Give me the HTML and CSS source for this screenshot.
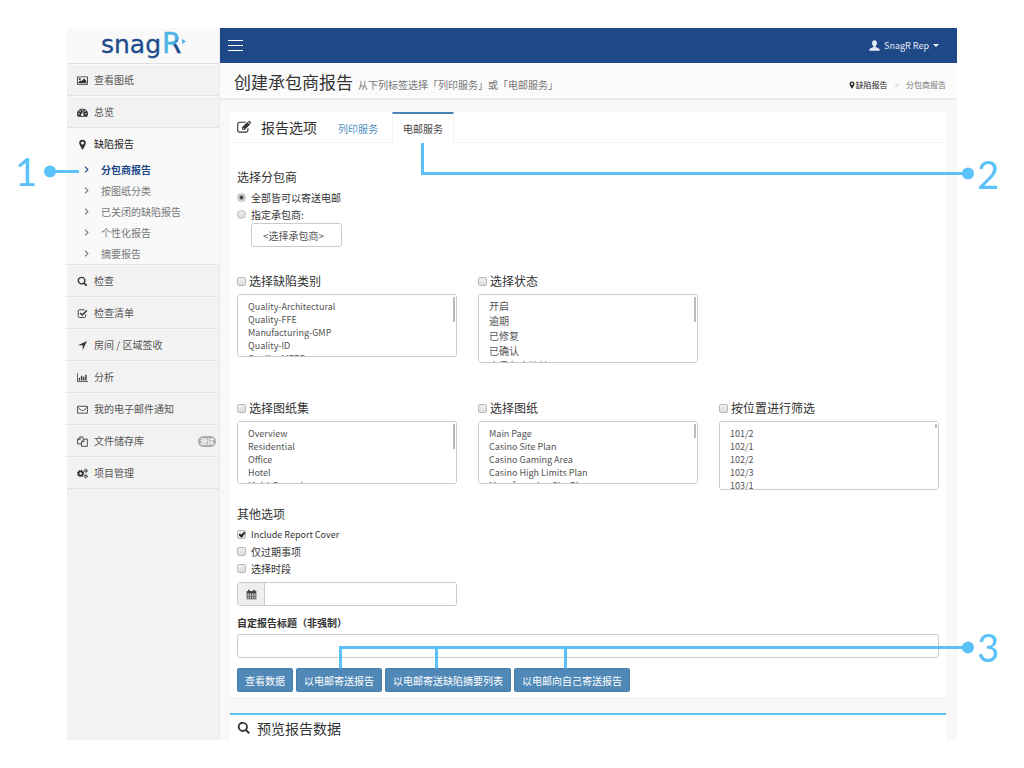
FILE: index.html
```html
<!DOCTYPE html>
<html lang="zh-CN">
<head>
	<meta charset="UTF-8">
	<title>创建承包商报告</title>
	<link rel="stylesheet" href="styles.css">
</head>
<body>
	<svg class="sprite" width="0" height="0" aria-hidden="true">
		<symbol id="i-image" viewBox="0 0 16 16"><path fill-rule="evenodd" d="M1 2h14a1 1 0 0 1 1 1v10a1 1 0 0 1-1 1H1a1 1 0 0 1-1-1V3a1 1 0 0 1 1-1zm.2 1.200v9.600h13.600V3.200z"/><circle cx="4" cy="5.700" r="1.500"/><path d="M2.300 11.800V10l2.500-2.500L6.300 9l4-4 3.400 3.400v3.400z"/></symbol>
		<symbol id="i-dash" viewBox="0 0 16 16"><path fill-rule="evenodd" d="M8 2a8 8 0 0 0-6.800 12.200h13.600A8 8 0 0 0 8 2zM2.800 8.800a1.100 1.100 0 1 1 0 2.200 1.100 1.100 0 0 1 0-2.200zm1.700-4a1.100 1.100 0 1 1 0 2.200 1.100 1.100 0 0 1 0-2.200zM8 3.100a1.100 1.100 0 1 1 0 2.200 1.100 1.100 0 0 1 0-2.200zm1.600 3.300-.8 3.300a1.900 1.900 0 1 1-1.200-.3l.9-3.300zm2.100-1.600a1.100 1.100 0 1 1 0 2.200 1.100 1.100 0 0 1 0-2.200zm1.500 4a1.100 1.100 0 1 1 0 2.200 1.100 1.100 0 0 1 0-2.200z"/></symbol>
		<symbol id="i-pin" viewBox="0 0 16 16"><path fill-rule="evenodd" d="M8 1a4.800 4.800 0 0 1 4.800 4.800c0 .8-.2 1.500-.5 2.100L9 14.500a1.100 1.100 0 0 1-2 0L3.700 7.900a4.800 4.800 0 0 1-.5-2.100A4.800 4.800 0 0 1 8 1zm0 2.600a2.200 2.200 0 1 0 0 4.400 2.200 2.200 0 0 0 0-4.400z"/></symbol>
		<symbol id="i-search" viewBox="0 0 16 16"><path fill-rule="evenodd" d="M6.700 1a5.700 5.700 0 0 1 4.700 8.900l3.400 3.300-1.700 1.700-3.400-3.400A5.700 5.700 0 1 1 6.700 1zm0 2a3.700 3.700 0 1 0 0 7.400 3.700 3.700 0 0 0 0-7.400z"/></symbol>
		<symbol id="i-check" viewBox="0 0 16 16"><path d="M12.500 9.500v2.800a1.500 1.500 0 0 1-1.500 1.500H3.300a1.500 1.500 0 0 1-1.500-1.500V4.200a1.500 1.500 0 0 1 1.500-1.500H11" fill="none" stroke="currentColor" stroke-width="1.300"/><path d="M4.500 7.200 7.600 10.200 14.300 3.700" fill="none" stroke="currentColor" stroke-width="2.200"/></symbol>
		<symbol id="i-arrow" viewBox="0 0 16 16"><path d="M14.500 1.500 8.300 14.500V7.800H1.500z"/></symbol>
		<symbol id="i-chart" viewBox="0 0 18 16"><path d="M0 1h1.200v12.800H18V15H0zM3 8.500h2.200v4.300H3zM6.500 5h2.200v7.800H6.500zM10 6.800h2.200v6H10zM13.500 3.500h2.200v9.300h-2.200z"/></symbol>
		<symbol id="i-mail" viewBox="0 0 16 16"><path d="M.8 3.300h14.400v10H.8zM.8 4.500C3 7 6 9.500 8 9.500s5-2.500 7.200-5" fill="none" stroke="currentColor" stroke-width="1.200"/></symbol>
		<symbol id="i-files" viewBox="0 0 16 16"><path d="M6.500 11.500H.8V5l3.400-3.600h4.300V4M4.500 1.500v3.700H1M6.500 15V8l3.400-3.500h5.200V15zM10.300 4.600v3.700H6.700" fill="none" stroke="currentColor" stroke-width="1.200"/></symbol>
		<symbol id="i-cogs" viewBox="0 0 16 16"><circle cx="5.300" cy="8" r="3" fill="none" stroke="currentColor" stroke-width="2.400"/><circle cx="5.300" cy="8" r="4.600" fill="none" stroke="currentColor" stroke-width="1.500" stroke-dasharray="1.800 1.810"/><circle cx="12.800" cy="4" r="1.700" fill="none" stroke="currentColor" stroke-width="1.400"/><circle cx="12.800" cy="4" r="2.600" fill="none" stroke="currentColor" stroke-width=".9" stroke-dasharray="1.300 1.420"/><circle cx="12.800" cy="12" r="1.700" fill="none" stroke="currentColor" stroke-width="1.400"/><circle cx="12.800" cy="12" r="2.600" fill="none" stroke="currentColor" stroke-width=".9" stroke-dasharray="1.300 1.420"/></symbol>
		<symbol id="i-angle" viewBox="0 0 16 16"><path d="m5.500 3 5 5-5 5" fill="none" stroke="currentColor" stroke-width="1.900"/></symbol>
		<symbol id="i-user" viewBox="0 0 16 16"><path d="M8 0.500c2.300 0 3.600 1.700 3.600 4 0 1.700-.8 3.500-2 4.400v1.300l4.700 2c.9.400 1.200 1 1.200 1.800v1.500H.5V14c0-.8.3-1.400 1.200-1.800l4.700-2V8.900c-1.200-.9-2-2.700-2-4.400 0-2.300 1.300-4 3.600-4z"/></symbol>
		<symbol id="i-edit" viewBox="0 0 16 16"><path d="M12.500 9.500v2.300a2 2 0 0 1-2 2H2.800a2 2 0 0 1-2-2V4.600a2 2 0 0 1 2-2H10" fill="none" stroke="currentColor" stroke-width="1.300"/><path fill-rule="evenodd" d="m12 2.300 2.800 2.800-5.900 5.900H5.700V8.300zM7 8.700l-.4.400v.6h.7v.6h.5l.4-.4z"/><path d="m12.600 1.700.7-.6a.9.900 0 0 1 1.200 0l1.400 1.400a.9.900 0 0 1 0 1.200l-.6.700z"/></symbol>
		<symbol id="i-calendar" viewBox="0 0 16 16"><path fill-rule="evenodd" d="M1 3h2V1h2.500v2h5V1H13v2h2v12H1zm1.200 3.400v1.800h2V6.400zm3.100 0v1.800h2.200V6.400zm3.300 0v1.800h2.200V6.400zm3.300 0v1.800h2V6.400zM2.200 9.200V11h2V9.200zm3.100 0V11h2.200V9.200zm3.300 0V11h2.200V9.200zm3.300 0V11h2V9.200zM2.200 12v1.900h2V12zm3.100 0v1.900h2.200V12zm3.300 0v1.900h2.200V12zm3.300 0v1.900h2V12z"/></symbol>
	</svg>

	<div class="wrapper">
		<aside class="sidebar">
			<a class="logo" href="#">
				<svg width="84" height="34" viewBox="0 0 84 34">
					<defs>
						<linearGradient id="rFill" x1="0" y1="0" x2="1" y2="1">
							<stop offset=".56" stop-color="#4cb3e6"/>
							<stop offset=".6" stop-color="#1c4c8c"/>
						</linearGradient>
					</defs>
					<text x="0" y="25" class="logoText">snag</text>
					<text x="61" y="25" class="logoR" fill="url(#rFill)" stroke="url(#rFill)">R</text>
					<path d="m81 11 4 2.500-4 2.500z" fill="#4cb3e6"/>
				</svg>
			</a>
			<ul class="menu">
				<li><a href="#"><svg class="icon"><use href="#i-image"/></svg>查看图纸</a></li>
				<li><a href="#"><svg class="icon"><use href="#i-dash"/></svg>总览</a></li>
				<li class="active">
					<a href="#"><svg class="icon"><use href="#i-pin"/></svg>缺陷报告</a>
					<ul class="subMenu">
						<li class="current"><a href="#"><svg class="icon"><use href="#i-angle"/></svg>分包商报告</a></li>
						<li><a href="#"><svg class="icon"><use href="#i-angle"/></svg>按图纸分类</a></li>
						<li><a href="#"><svg class="icon"><use href="#i-angle"/></svg>已关闭的缺陷报告</a></li>
						<li><a href="#"><svg class="icon"><use href="#i-angle"/></svg>个性化报告</a></li>
						<li><a href="#"><svg class="icon"><use href="#i-angle"/></svg>摘要报告</a></li>
					</ul>
				</li>
				<li><a href="#"><svg class="icon"><use href="#i-search"/></svg>检查</a></li>
				<li><a href="#"><svg class="icon"><use href="#i-check"/></svg>检查清单</a></li>
				<li><a href="#"><svg class="icon"><use href="#i-arrow"/></svg>房间 / 区域签收</a></li>
				<li><a href="#"><svg class="icon"><use href="#i-chart"/></svg>分析</a></li>
				<li><a href="#"><svg class="icon"><use href="#i-mail"/></svg>我的电子邮件通知</a></li>
				<li><a href="#"><svg class="icon"><use href="#i-files"/></svg>文件储存库<span class="badge">测试</span></a></li>
				<li><a href="#"><svg class="icon"><use href="#i-cogs"/></svg>项目管理</a></li>
			</ul>
		</aside>

		<div class="main">
			<header class="navbar">
				<button type="button" class="toggle" aria-label="菜单"><i></i><i></i><i></i></button>
				<a class="user" href="#"><svg class="icon"><use href="#i-user"/></svg>SnagR Rep<span class="caret"></span></a>
			</header>

			<section class="pageHeader">
				<h1>创建承包商报告</h1>
				<small>从下列标签选择「列印服务」或「电邮服务」</small>
				<nav class="breadcrumb">
					<a href="#"><svg class="icon"><use href="#i-pin"/></svg>缺陷报告</a>
					<span class="sep">&gt;</span>
					<span>分包商报告</span>
				</nav>
			</section>

			<div class="content">
				<section class="box">
					<div class="boxHeader">
						<svg class="icon"><use href="#i-edit"/></svg>
						<h2>报告选项</h2>
						<a class="tab" href="#">列印服务</a>
						<a class="tab active" href="#">电邮服务</a>
					</div>

					<form class="boxBody">
						<div class="group contractor">
							<h3>选择分包商</h3>
							<label class="option"><input type="radio" name="target" checked>全部皆可以寄送电邮</label>
							<label class="option"><input type="radio" name="target">指定承包商:</label>
							<select class="picker" aria-label="选择承包商">
								<option>&lt;选择承包商&gt;</option>
							</select>
						</div>

						<div class="filters">
							<div class="filter">
								<label><input type="checkbox">选择缺陷类别</label>
								<div class="list">
									<select multiple aria-label="选择缺陷类别">
										<option>Quality-Architectural</option>
										<option>Quality-FFE</option>
										<option>Manufacturing-GMP</option>
										<option>Quality-ID</option>
										<option>Quality-MEPF</option>
									</select>
									<span class="thumb"></span>
								</div>
							</div>
							<div class="filter">
								<label><input type="checkbox">选择状态</label>
								<div class="list tall cjk">
									<select multiple aria-label="选择状态">
										<option>开启</option>
										<option>逾期</option>
										<option>已修复</option>
										<option>已确认</option>
										<option>由承包商管核</option>
									</select>
									<span class="thumb"></span>
								</div>
							</div>
						</div>

						<div class="filters">
							<div class="filter">
								<label><input type="checkbox">选择图纸集</label>
								<div class="list">
									<select multiple aria-label="选择图纸集">
										<option>Overview</option>
										<option>Residential</option>
										<option>Office</option>
										<option>Hotel</option>
										<option>Multi-Carpark</option>
									</select>
									<span class="thumb"></span>
								</div>
							</div>
							<div class="filter">
								<label><input type="checkbox">选择图纸</label>
								<div class="list">
									<select multiple aria-label="选择图纸">
										<option>Main Page</option>
										<option>Casino Site Plan</option>
										<option>Casino Gaming Area</option>
										<option>Casino High Limits Plan</option>
										<option>Manufacturing Site Plan</option>
									</select>
									<span class="thumb short"></span>
								</div>
							</div>
							<div class="filter">
								<label><input type="checkbox">按位置进行筛选</label>
								<div class="list tall">
									<select multiple aria-label="按位置进行筛选">
										<option>101/2</option>
										<option>102/1</option>
										<option>102/2</option>
										<option>102/3</option>
										<option>103/1</option>
									</select>
									<span class="thumb tiny"></span>
								</div>
							</div>
						</div>

						<div class="group">
							<h3>其他选项</h3>
							<label class="option latin"><input type="checkbox" checked>Include Report Cover</label>
							<label class="option"><input type="checkbox">仅过期事项</label>
							<label class="option"><input type="checkbox">选择时段</label>
						</div>

						<div class="dateRange">
							<span class="addon"><svg class="icon"><use href="#i-calendar"/></svg></span>
							<input type="text" aria-label="选择时段">
						</div>

						<label class="titleLabel" for="reportTitle">自定报告标题（非强制）</label>
						<input type="text" id="reportTitle" class="titleInput">

						<div class="actions">
							<button type="button">查看数据</button>
							<button type="button">以电邮寄送报告</button>
							<button type="button">以电邮寄送缺陷摘要列表</button>
							<button type="button">以电邮向自己寄送报告</button>
						</div>
					</form>
				</section>

				<section class="box preview">
					<svg class="icon"><use href="#i-search"/></svg>
					<h2>预览报告数据</h2>
				</section>
			</div>
		</div>
	</div>

	<!-- 标注 -->
	<svg class="callouts" width="1024" height="768" viewBox="0 0 1024 768">
		<path d="M50 171.500h29M422.500 143v30.500H968M968 647.500H340.500v21M436.500 647.500v21M565.500 647.500v21"/>
		<circle cx="50" cy="171.500" r="6"/>
		<circle cx="968" cy="173.500" r="6"/>
		<circle cx="968" cy="647.500" r="6"/>
		<text x="15" y="186">1</text>
		<text x="977" y="189">2</text>
		<text x="977" y="662">3</text>
	</svg>
</body>
</html>
```
FILE: styles.css
```css
*,
*::after {
  box-sizing: border-box;
}
body {
  position: relative;
  margin: 0;
  padding: 28px 67px;
  background: #fff;
  color: #444;
  font-family: "Noto Sans CJK SC", sans-serif;
  font-size: 10px;
  line-height: 16px;
}
a {
  color: inherit;
  text-decoration: none;
}
ul {
  list-style: none;
  margin: 0;
  padding: 0;
}
h1,
h2,
h3 {
  margin: 0;
  color: #333;
  font-weight: normal;
}
h2 {
  font-size: 14px;
}
h3,
.filter label {
  color: #333;
  font-size: 12px;
  line-height: 18px;
}
h3 {
  margin-bottom: 3px;
}
input,
select,
button {
  margin: 0;
  font-family: inherit;
  font-size: 10px;
}
.sprite {
  position: absolute;
}
.icon {
  flex: none;
  width: 11px;
  height: 11px;
  fill: currentColor;
}
.wrapper {
  display: flex;
  min-height: calc(100vh - 56px);
}

/* 左侧菜单 */
.sidebar {
  flex: none;
  width: 153px;
  background: #f2f2f2;
  border-right: 1px solid #ececec;
}
.logo {
  display: flex;
  justify-content: center;
  height: 35px;
  background: #f9f9f9;
}
.logo svg {
  overflow: visible;
}
.logoText,
.logoR {
  font-family: "DejaVu Sans", sans-serif;
}
.logoText {
  fill: #1c4c8c;
  stroke: #1c4c8c;
  stroke-width: .3;
  font-size: 25px;
}
.logoR {
  stroke-width: .4;
  font-size: 28px;
}
.menu > li {
  border-top: 1px solid #e2e2e2;
}
.menu > li:last-child {
  border-bottom: 1px solid #e2e2e2;
}
.menu > li > a {
  display: flex;
  align-items: center;
  gap: 6px;
  height: 31px;
  padding: 0 3px 0 10px;
  border-top: 1px solid #fafafa;
  color: #555;
}
.menu > li > a .icon {
  color: #333;
}
.menu > .active {
  background: #f9f9f9;
}
.menu > .active > a {
  color: #222;
}
.subMenu a {
  display: flex;
  align-items: center;
  gap: 10px;
  height: 21px;
  padding-left: 15px;
  color: #777;
}
.subMenu .icon {
  width: 9px;
  height: 9px;
}
.subMenu .current a {
  color: #1f4888;
  font-weight: bold;
}
.badge {
  margin-left: auto;
  padding: 0 2px;
  border-radius: 6px;
  background: #aaa;
  color: #fff;
  font-size: 7px;
  font-weight: bold;
  line-height: 11px;
}

/* 顶部 */
.main {
  flex: 1;
  min-width: 0;
  background: #f8f8f8;
}
.navbar {
  display: flex;
  align-items: center;
  justify-content: space-between;
  height: 35px;
  padding: 0 18px 0 8px;
  background: #1f4888;
  color: #fff;
}
.toggle {
  display: grid;
  gap: 4px;
  padding: 0;
  width: 15px;
  border: 0;
  background: none;
}
.toggle i {
  height: 1px;
  background: #fff;
}
.user {
  display: flex;
  align-items: center;
  gap: 4px;
  color: #e4eaf3;
  font-size: 9px;
}
.caret {
  border: 3px solid transparent;
  border-top-color: #fff;
  border-bottom: 0;
}
.pageHeader {
  display: flex;
  align-items: baseline;
  gap: 5px;
  height: 37px;
  padding: 11px 11px 0 14px;
  background: #fbfbfb;
  border-bottom: 2px solid #ececec;
}
.pageHeader h1 {
  font-size: 17px;
}
.pageHeader small {
  color: #777;
  font-size: 10px;
}
.breadcrumb {
  display: flex;
  align-items: center;
  gap: 7px;
  margin-left: auto;
  color: #777;
  font-size: 8px;
}
.breadcrumb a {
  display: flex;
  align-items: center;
  color: #222;
}
.breadcrumb .icon {
  width: 8px;
  height: 8px;
}
.breadcrumb .sep {
  color: #bbb;
}

/* 内容 */
.content {
  padding: 12px 11px 0 10px;
}
.box {
  margin-bottom: 14px;
  background: #fff;
  border-bottom: 1px solid #ececec;
}
.boxHeader {
  display: flex;
  align-items: center;
  height: 31px;
  padding-left: 7px;
  border-bottom: 1px solid #f4f4f4;
}
.boxHeader .icon,
.preview .icon {
  width: 14px;
  height: 14px;
  margin-right: 10px;
  color: #333;
}
.boxHeader h2 {
  margin-right: 10px;
}
.tab {
  height: 31px;
  padding: 0 10px;
  border: 1px solid transparent;
  border-top-width: 2px;
  border-bottom: 0;
  color: #4c8fc4;
  line-height: 30px;
}
.tab + .tab {
  margin-left: 3px;
}
.tab.active {
  border-color: #4a85b5 #f4f4f4 transparent;
  background: #fff;
  color: #444;
}
.boxBody {
  padding: 25px 7px 6px;
}
.option {
  display: flex;
  align-items: center;
  gap: 5px;
  height: 17px;
  color: #333;
}
.option.latin {
  font-size: 9px;
}
[type="checkbox"],
[type="radio"] {
  flex: none;
  appearance: none;
  width: 9px;
  height: 9px;
  border: 1px solid #b9b9b9;
  border-radius: 2px;
  background: linear-gradient(#f0f0f0, #dcdcdc);
}
[type="radio"] {
  border-radius: 50%;
}
[type="radio"]:checked {
  background: radial-gradient(circle, #444 1px, #e6e6e6 3px);
}
[type="checkbox"]:checked {
  position: relative;
}
[type="checkbox"]:checked::after {
  content: "";
  position: absolute;
  left: 2px;
  top: 0;
  width: 4px;
  height: 6px;
  border: solid #222;
  border-width: 0 2px 2px 0;
  transform: rotate(40deg);
}
.contractor {
  margin-bottom: 25px;
}
.picker {
  display: block;
  appearance: none;
  height: 24px;
  width: 91px;
  margin-left: 14px;
  padding: 0 11px;
  border: 1px solid #ccc;
  border-radius: 3px;
  background: #fff;
  color: #555;
}
.filters {
  display: grid;
  grid-template-columns: repeat(3, 1fr);
  gap: 21px;
  min-height: 91px;
  margin-bottom: 36px;
}
.filters + .filters {
  margin-bottom: 15px;
}
.filter label {
  display: flex;
  align-items: center;
  gap: 3px;
}
.list {
  position: relative;
  height: 63px;
  margin-top: 4px;
}
.list.tall {
  height: 69px;
}
.list select {
  display: block;
  width: 100%;
  height: 100%;
  padding: 5px 9px 0;
  border: 1px solid #ccc;
  border-radius: 3px;
  background: #fff;
  color: #555;
  font-size: 9px;
  scrollbar-width: none;
}
.list option {
  height: 13px;
  min-height: 0;
  padding: 0 1px;
  line-height: 13px;
}
.list.cjk select {
  padding-top: 3px;
  font-size: 10px;
}
.list.cjk option {
  height: 15px;
  line-height: 15px;
}
.thumb {
  position: absolute;
  top: 3px;
  right: 2px;
  width: 2px;
  height: 25px;
  background: #bbb;
}
.thumb.short {
  height: 14px;
}
.thumb.tiny {
  height: 4px;
}
.dateRange {
  display: flex;
  width: 220px;
  height: 24px;
  margin-top: 5px;
  border: 1px solid #ccc;
  border-radius: 3px;
  overflow: hidden;
}
.addon {
  display: flex;
  align-items: center;
  justify-content: center;
  width: 27px;
  background: #eee;
  border-right: 1px solid #ccc;
}
.dateRange input {
  flex: 1;
  min-width: 0;
  border: 0;
}
.titleLabel {
  display: block;
  margin: 9px 0 3px;
  color: #333;
  font-weight: bold;
}
.titleInput {
  display: block;
  width: 100%;
  height: 24px;
  border: 1px solid #ccc;
  border-radius: 3px;
}
.actions {
  display: flex;
  gap: 3px;
  margin-top: 10px;
}
.actions button {
  height: 24px;
  padding: 0 7px;
  border: 1px solid #497fab;
  border-radius: 2px;
  background: #5089b8;
  color: #fff;
}
.preview {
  display: flex;
  align-items: center;
  height: 27px;
  margin-bottom: 0;
  padding: 0 7px;
  border-top: 2px solid #5bc0e8;
  border-bottom: 0;
}
.preview .icon {
  margin-right: 6px;
}

/* 标注线 */
.callouts {
  position: absolute;
  top: 0;
  left: 0;
  pointer-events: none;
}
.callouts path {
  fill: none;
  stroke: #5bc1f9;
  stroke-width: 3;
}
.callouts circle,
.callouts text {
  fill: #5bc1f9;
}
.callouts text {
  font-family: Lato, sans-serif;
  font-size: 38px;
}
```
